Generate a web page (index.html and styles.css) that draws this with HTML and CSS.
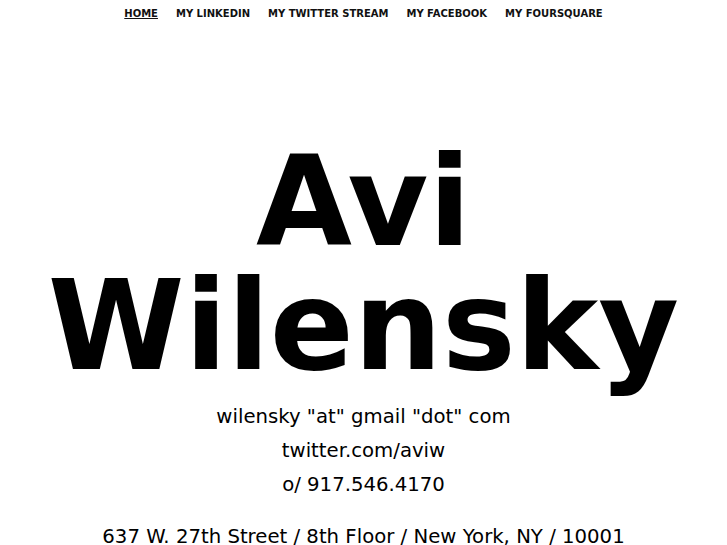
FILE: index.html
```html
<!DOCTYPE html>
<html>
<head>
<meta charset="utf-8">
<link rel="stylesheet" href="styles.css">
</head>
<body>
<nav class="nav">
  <a class="nav-link active" href="#">Home</a>
  <a class="nav-link" href="#">My LinkedIn</a>
  <a class="nav-link" href="#">My Twitter Stream</a>
  <a class="nav-link" href="#">My Facebook</a>
  <a class="nav-link" href="#">My Foursquare</a>
</nav>
<main class="main">
  <h1 class="name">Avi<br>Wilensky</h1>
  <div class="contact">
    <p class="line">wilensky "at" gmail "dot" com</p>
    <p class="line">twitter.com/aviw</p>
    <p class="line">o/ 917.546.4170</p>
  </div>
  <p class="address">637 W. 27th Street / 8th Floor / New York, NY / 10001</p>
</main>
</body>
</html>
```
FILE: styles.css
```css
html, body {
  margin: 0;
  padding: 0;
  background: #fff;
  color: #000;
  font-family: "DejaVu Sans", sans-serif;
}
.nav {
  display: flex;
  justify-content: center;
  gap: 18px;
  padding-top: 7px;
  height: 20px;
}
.nav-link {
  font-size: 10px;
  font-weight: bold;
  text-transform: uppercase;
  color: #111;
  text-decoration: none;
  line-height: 13px;
}
.nav-link.active {
  text-decoration: underline;
}
.main {
  text-align: center;
}
.name {
  margin: 113px 0 0;
  font-size: 124px;
  line-height: 124px;
  font-weight: bold;
}
.contact {
  margin-top: 12px;
}
.line {
  margin: 0;
  font-size: 19.7px;
  line-height: 34px;
}
.address {
  margin: 18px 0 0;
  font-size: 19.7px;
  line-height: 34px;
}
```
